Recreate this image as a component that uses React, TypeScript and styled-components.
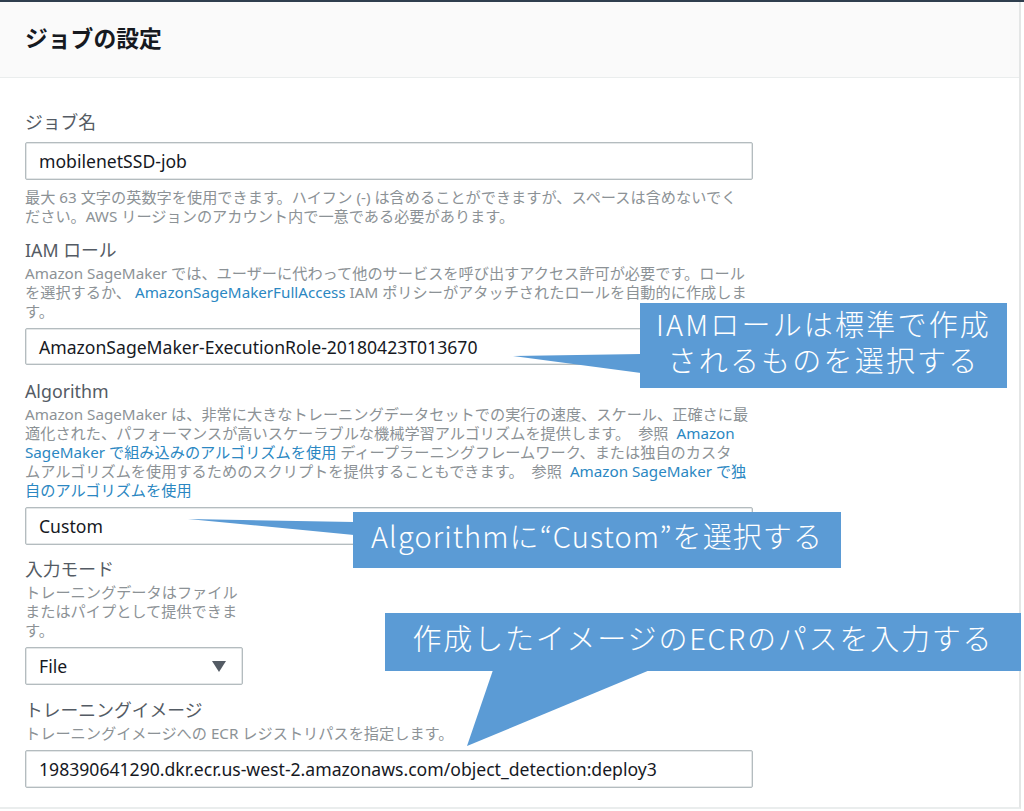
import React from 'react';
import styled, { createGlobalStyle } from 'styled-components';

const Global = createGlobalStyle`
  html, body {
    margin: 0;
    padding: 0;
    background: #fff;
  }
`;

const Page = styled.div`
  position: relative;
  width: 1024px;
  height: 811px;
  overflow: hidden;
  background: #fff;
  font-family: "Noto Sans", "Noto Sans CJK JP", sans-serif;
  box-sizing: border-box;
  border-top: 2px solid #2f3e4e;
`;

const Panel = styled.div`
  width: 1021px;
  height: 807px;
  border-right: 2px solid #e4e6e6;
  border-bottom: 2px solid #eaeded;
  box-sizing: border-box;
`;

const Header = styled.div`
  height: 76px;
  padding: 0 25px;
  display: flex;
  align-items: center;
  background: #fafafa;
  border-bottom: 1px solid #eaeded;
  box-sizing: border-box;
`;

const Title = styled.h2`
  margin: 0 0 5px;
  font-size: 22.8px;
  font-weight: 700;
  color: #16191f;
`;

const Body = styled.div`
  width: 728px;
  padding: 32px 0 0 25px;
  display: flex;
  flex-direction: column;
`;

const Field = styled.div<{ $mt: number }>`
  margin-top: ${props => props.$mt}px;
`;

const Label = styled.div`
  font-size: 17.8px;
  line-height: 24px;
  color: #545b64;
  white-space: nowrap;
`;

const Help = styled.div<{ $mt?: number }>`
  margin-top: ${props => props.$mt ?? 2}px;
  font-size: 15.2px;
  line-height: 19px;
  color: #8c9296;
  white-space: nowrap;
`;

const Link = styled.span`
  color: #2b87c2;
`;

const SeeAlso = styled.span`
  margin: 0 4px;
`;

const Box = styled.div<{ $width?: number; $mt: number; $height?: number }>`
  width: ${props => props.$width ?? 728}px;
  height: ${props => props.$height ?? 38}px;
  margin-top: ${props => props.$mt}px;
  padding: 0 13px;
  display: flex;
  align-items: center;
  justify-content: space-between;
  background: #fff;
  border: 1px solid #b4bcbf;
  box-shadow: inset 0 0 0 0.5px #c9cfd1;
  border-radius: 2px;
  box-sizing: border-box;
  font-size: 17.6px;
  color: #16191f;
  white-space: nowrap;
`;

const Caret = styled.svg`
  width: 14px;
  height: 11px;
  margin-right: 3px;
  fill: #545b64;
`;

const Callout = styled.div<{ $left: number; $top: number; $width: number; $height: number; $spacing: number }>`
  position: absolute;
  left: ${props => props.$left}px;
  top: ${props => props.$top}px;
  width: ${props => props.$width}px;
  height: ${props => props.$height}px;
  padding-bottom: 10px;
  display: flex;
  align-items: center;
  justify-content: center;
  text-align: center;
  background: #5b9bd5;
  color: #fff;
  font-family: "Noto Sans CJK JP", sans-serif;
  font-weight: 300;
  font-size: 29px;
  line-height: 36px;
  letter-spacing: ${props => props.$spacing}px;
  white-space: nowrap;
  box-sizing: border-box;
`;

const Tail = styled.svg`
  position: absolute;
  left: 0;
  top: -2px;
  width: 1024px;
  height: 811px;
  fill: #5b9bd5;
  pointer-events: none;
`;

const App: React.FC = () => {
  return (
    <Page>
      <Global />
      <Panel>
        <Header>
          <Title>ジョブの設定</Title>
        </Header>
        <Body>
          <Field $mt={0}>
            <Label>ジョブ名</Label>
            <Box $mt={8}>mobilenetSSD-job</Box>
            <Help $mt={8}>
              最大 63 文字の英数字を使用できます。ハイフン (-) は含めることができますが、スペースは含めないでく
              <br />
              ださい。AWS リージョンのアカウント内で一意である必要があります。
            </Help>
          </Field>
          <Field $mt={12}>
            <Label>IAM ロール</Label>
            <Help>
              Amazon SageMaker では、ユーザーに代わって他のサービスを呼び出すアクセス許可が必要です。ロール
              <br />
              を選択するか、 <Link>AmazonSageMakerFullAccess</Link> IAM ポリシーがアタッチされたロールを自動的に作成しま
              <br />
              す。
            </Help>
            <Box $mt={7} $height={37}>AmazonSageMaker-ExecutionRole-20180423T013670</Box>
          </Field>
          <Field $mt={14}>
            <Label>Algorithm</Label>
            <Help>
              Amazon SageMaker は、非常に大きなトレーニングデータセットでの実行の速度、スケール、正確さに最
              <br />
              適化された、パフォーマンスが高いスケーラブルな機械学習アルゴリズムを提供します。 <SeeAlso>参照</SeeAlso> <Link>Amazon</Link>
              <br />
              <Link>SageMaker で組み込みのアルゴリズムを使用</Link> ディープラーニングフレームワーク、または独自のカスタ
              <br />
              ムアルゴリズムを使用するためのスクリプトを提供することもできます。 <SeeAlso>参照</SeeAlso> <Link>Amazon SageMaker で独</Link>
              <br />
              <Link>自のアルゴリズムを使用</Link>
            </Help>
            <Box $mt={7}>Custom</Box>
          </Field>
          <Field $mt={12}>
            <Label>入力モード</Label>
            <Help>
              トレーニングデータはファイル
              <br />
              またはパイプとして提供できま
              <br />
              す。
            </Help>
            <Box $mt={7} $width={218}>
              File
              <Caret viewBox="0 0 14 11">
                <path d="M0 0h14L7 11z" />
              </Caret>
            </Box>
          </Field>
          <Field $mt={13}>
            <Label>トレーニングイメージ</Label>
            <Help>トレーニングイメージへの ECR レジストリパスを指定します。</Help>
            <Box $mt={7}>198390641290.dkr.ecr.us-west-2.amazonaws.com/object_detection:deploy3</Box>
          </Field>
        </Body>
      </Panel>

      <Tail viewBox="0 0 1024 811">
        <path d="M513 356L641 354V373z" />
        <path d="M188 519L354 522V535z" />
        <path d="M493 670H650L467 746z" />
      </Tail>
      <Callout $left={640} $top={301} $width={367} $height={85} $spacing={2.2}>
        <span>
          IAMロールは標準で作成
          <br />
          されるものを選択する
        </span>
      </Callout>
      <Callout $left={353} $top={510} $width={488} $height={56} $spacing={1.1}>
        Algorithmに“Custom”を選択する
      </Callout>
      <Callout $left={385} $top={611} $width={636} $height={58} $spacing={1.8}>
        作成したイメージのECRのパスを入力する
      </Callout>
    </Page>
  );
};

export default App;
